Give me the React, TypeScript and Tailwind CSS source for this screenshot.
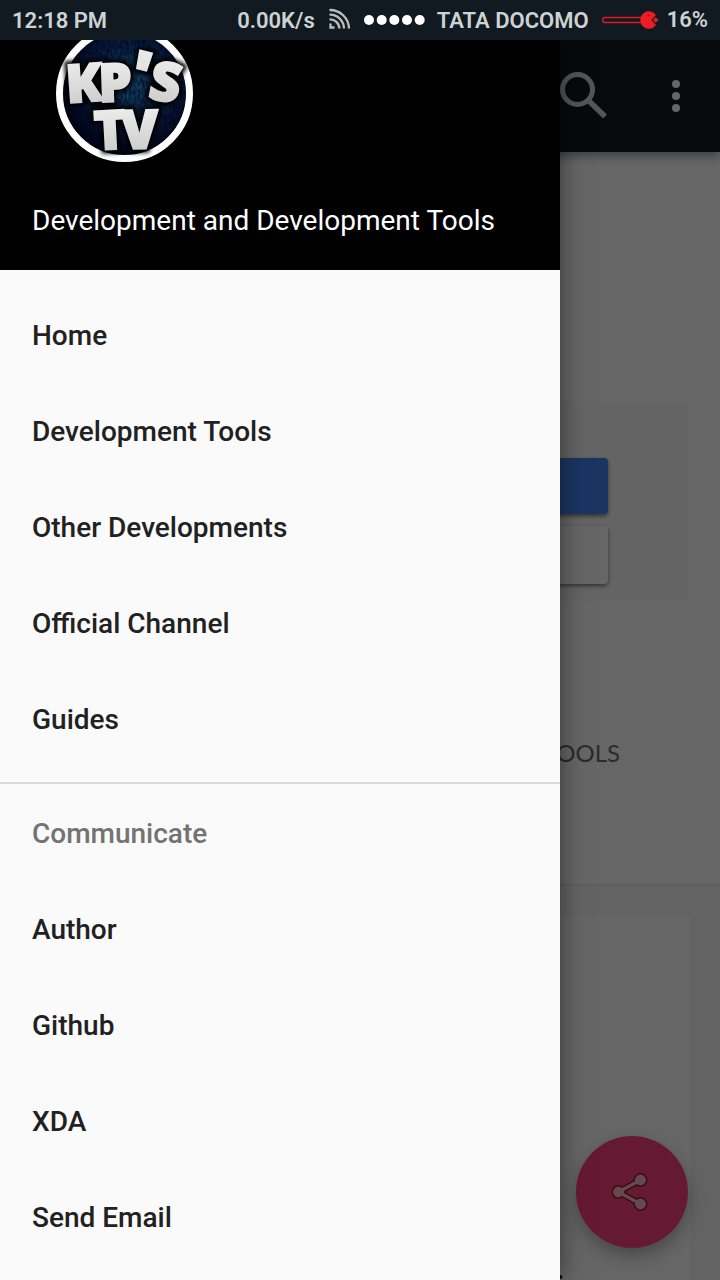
import React from "react";

const primaryLinks = [
  "Home",
  "Development Tools",
  "Other Developments",
  "Official Channel",
  "Guides",
];

const communicateLinks = ["Author", "Github", "XDA", "Send Email"];

function FeedIcon() {
  return (
    <svg className="h-6 w-6" viewBox="0 0 24 24" fill="none" stroke="#b9bfbb" strokeWidth="2.300" aria-hidden="true">
      <path d="M2.500 2A19 19 0 0 1 22 20.500" />
      <path d="M2.500 6.700A14 14 0 0 1 17 20.500" />
      <path d="M2.500 11.400A9.300 9.300 0 0 1 12.400 20.500" />
      <path d="M3.500 15.500V19.500H7.500" />
    </svg>
  );
}

function SignalDots() {
  return (
    <svg className="h-3 w-[62px]" viewBox="0 0 62 12" fill="#ffffff" aria-hidden="true">
      <circle cx="6" cy="6" r="5" />
      <circle cx="18.700" cy="6" r="5" />
      <circle cx="31.300" cy="6" r="5" />
      <circle cx="44" cy="6" r="5" />
      <circle cx="56.700" cy="6" r="5" />
    </svg>
  );
}

function BatteryIcon() {
  return (
    <svg className="h-5 w-[58px]" viewBox="0 0 58 20" aria-hidden="true">
      <path d="M41 7.500H4a2.500 2.500 0 0 0 0 5H41" fill="none" stroke="#e01b24" strokeWidth="1.400" />
      <path d="M50.500 10L55 5A8.700 8.700 0 1 0 55 15Z" fill="#ee1c25" />
      <circle cx="47.500" cy="5.500" r="1" fill="#8a1218" />
      <path d="M52 10L54.700 7.300L57.500 10L54.700 12.700Z" fill="#ee1c25" />
    </svg>
  );
}

function StatusBar() {
  return (
    <div className="flex h-10 shrink-0 items-center bg-[#101a20] px-3 text-[22px] leading-8 font-semibold whitespace-nowrap text-[#cfd2d3]">
      <span className="grow pt-0.5">12:18 PM</span>
      <div className="flex items-center gap-3">
        <span className="pt-0.5">0.00K/s</span>
        <FeedIcon />
        <SignalDots />
        <span className="pt-0.5">TATA DOCOMO</span>
        <BatteryIcon />
      </div>
      <span className="pl-2">16%</span>
    </div>
  );
}

function Toolbar() {
  return (
    <header className="relative flex h-28 items-center justify-end bg-[#101a20] pr-5 shadow-[0_4px_10px_rgba(0,0,0,0.4)]">
      <button type="button" aria-label="Search" className="mr-9 flex h-16 w-16 items-center justify-center">
        <svg className="h-12 w-12" viewBox="0 0 48 48" fill="none" stroke="#d3d5d6" aria-hidden="true">
          <circle cx="17.500" cy="17.500" r="15" strokeWidth="5" />
          <path d="M29.500 29.500L45 44.500" strokeWidth="5.500" />
        </svg>
      </button>
      <button type="button" aria-label="More options" className="flex h-12 w-12 items-center justify-center">
        <svg className="h-8 w-2" viewBox="0 0 8 32" fill="#ffffff" aria-hidden="true">
          <circle cx="4" cy="4" r="4" />
          <circle cx="4" cy="16" r="4" />
          <circle cx="4" cy="28" r="4" />
        </svg>
      </button>
    </header>
  );
}

function PageContent() {
  return (
    <main className="flex grow flex-col bg-white">
      <section className="border-b-2 border-[#eeeeee] px-[30px] pt-[250px] pb-[115px]">
        <div className="bg-[#fafafa] px-[82px] pt-14 pb-[18px]">
          <div className="h-14 rounded bg-[#4285f4] shadow-[0_2px_4px_rgba(0,0,0,0.5)]" />
          <div className="mt-3 h-[58px] rounded bg-white shadow-[0_2px_4px_rgba(0,0,0,0.5)]" />
        </div>
        <h1 className="mt-[135px] pr-[70px] text-right font-['Lato',sans-serif] text-[24px] leading-8 text-[#6c6c6c]">
          TOOLS
        </h1>
      </section>
      <section className="flex grow flex-col bg-[#f7f7f7] px-[30px] pt-[30px]">
        <article className="flex grow flex-col justify-end bg-white pr-[126px] text-right text-[28px] leading-5 font-bold text-black">
          <p>.</p>
        </article>
      </section>
    </main>
  );
}

function ShareButton() {
  return (
    <button
      type="button"
      aria-label="Share"
      className="absolute right-8 bottom-8 flex h-28 w-28 items-center justify-center rounded-full bg-[#ff4081] shadow-[0_8px_18px_rgba(0,0,0,0.3)]"
    >
      <svg className="h-10 w-10" viewBox="0 0 40 40" aria-hidden="true">
        <g fill="#8c1c40" stroke="#8c1c40">
          <path d="M28.500 8L6.500 20L28.500 32" fill="none" strokeWidth="6" />
          <circle cx="28.500" cy="8" r="6.500" />
          <circle cx="6.500" cy="20" r="6.500" />
          <circle cx="28.500" cy="32" r="6.500" />
        </g>
        <g fill="#ffb4c8" stroke="#ffb4c8">
          <path d="M28.500 8L6.500 20L28.500 32" fill="none" strokeWidth="3.500" />
          <circle cx="28.500" cy="8" r="5" />
          <circle cx="6.500" cy="20" r="5" />
          <circle cx="28.500" cy="32" r="5" />
        </g>
      </svg>
    </button>
  );
}

function LogoLetters() {
  return (
    <>
      <text x="11" y="63" fontSize="53" transform="rotate(-4 11 63)">K</text>
      <text x="43" y="62" fontSize="53" transform="rotate(-2 43 62)">P</text>
      <text x="68" y="58" fontSize="70" transform="rotate(14 68 58)">'</text>
      <text x="91" y="58" fontSize="54" transform="rotate(10 91 58)">S</text>
      <text x="39" y="110" fontSize="54" transform="rotate(-3 39 110)">T</text>
      <text x="65" y="109" fontSize="54" transform="rotate(-1 65 109)">V</text>
    </>
  );
}

function Logo() {
  return (
    <svg className="ml-6 h-[124px] w-[138px]" viewBox="0 0 138 124" role="img" aria-label="KP's TV">
      <defs>
        <radialGradient id="disc" cx="0.55" cy="0.42" r="0.55">
          <stop offset="0" stopColor="#154862" />
          <stop offset="0.6" stopColor="#081f3a" />
          <stop offset="1" stopColor="#01030a" />
        </radialGradient>
        <linearGradient id="metal" x1="0" y1="0" x2="0" y2="1">
          <stop offset="0" stopColor="#f8f8f8" />
          <stop offset="1" stopColor="#c4c4c4" />
        </linearGradient>
        <filter id="grain" x="0" y="0" width="1" height="1">
          <feTurbulence type="fractalNoise" baseFrequency="0.45 0.2" numOctaves="2" seed="4" />
          <feColorMatrix values="0 0 0 0 0  0 0 0 0 0  0 0 0 0 0.02  1.6 0 0 0 -0.45" />
          <feComposite in2="SourceGraphic" operator="in" />
        </filter>
        <filter id="soft" x="-0.2" y="-0.2" width="1.4" height="1.4">
          <feGaussianBlur stdDeviation="2" />
        </filter>
      </defs>
      <circle cx="68.500" cy="53.500" r="65" fill="url(#disc)" stroke="#ffffff" strokeWidth="7" />
      <circle cx="68.500" cy="53.500" r="61" fill="#000000" filter="url(#grain)" />
      <g fontFamily="'Open Sans', sans-serif" fontWeight="800">
        <g fill="#000000" stroke="#000000" strokeWidth="8" filter="url(#soft)">
          <LogoLetters />
        </g>
        <g fill="url(#metal)" stroke="url(#metal)" strokeWidth="2">
          <LogoLetters />
        </g>
      </g>
    </svg>
  );
}

function NavLink({ label }: { label: string }) {
  return (
    <li>
      <a href="#" className="flex h-24 items-center px-8">
        {label}
      </a>
    </li>
  );
}

function Drawer() {
  return (
    <aside className="absolute inset-y-0 left-0 w-7/9 overflow-hidden bg-[#fafafa] shadow-[0_0_24px_rgba(0,0,0,0.5)]">
      <div className="h-[230px] bg-black px-8">
        <Logo />
        <p className="pt-[37px] text-[28px] leading-10 whitespace-nowrap text-white">
          Development and Development Tools
        </p>
      </div>
      <nav className="pt-[18px] text-[28px] leading-8 font-medium text-[#212121]">
        <ul className="border-b-2 border-[#dadada] pb-[14px]">
          {primaryLinks.map((label) => (
            <NavLink key={label} label={label} />
          ))}
        </ul>
        <h2 className="mt-0.5 flex h-24 items-center px-8 text-[#737373]">Communicate</h2>
        <ul>
          {communicateLinks.map((label) => (
            <NavLink key={label} label={label} />
          ))}
        </ul>
      </nav>
    </aside>
  );
}

export default function App() {
  return (
    <div className="flex h-screen flex-col overflow-hidden font-['Roboto',sans-serif]">
      <StatusBar />
      <div className="relative flex grow flex-col overflow-hidden">
        <Toolbar />
        <PageContent />
        <ShareButton />
        <div className="absolute inset-0 bg-black/60" />
        <Drawer />
      </div>
    </div>
  );
}
